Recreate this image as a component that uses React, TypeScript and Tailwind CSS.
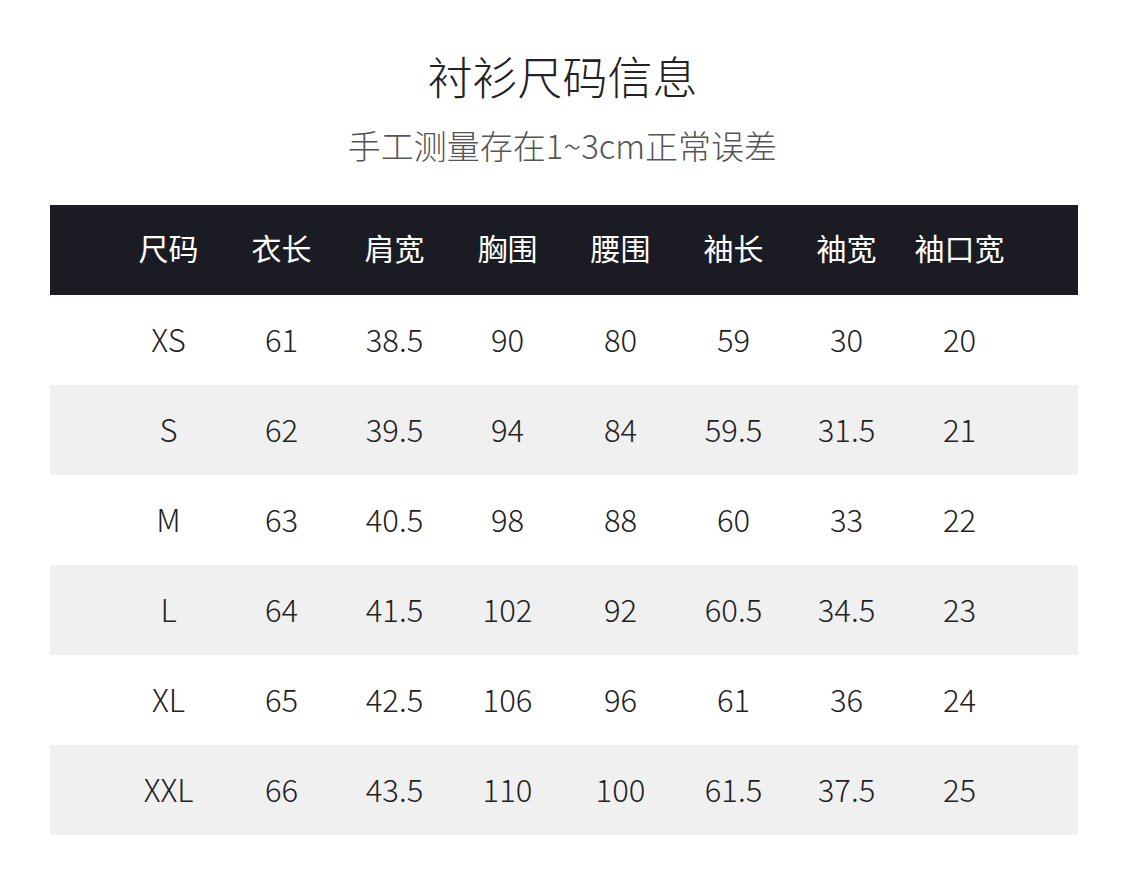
const headers = ["尺码", "衣长", "肩宽", "胸围", "腰围", "袖长", "袖宽", "袖口宽"];

const rows = [
    ["XS", "61", "38.5", "90", "80", "59", "30", "20"],
    ["S", "62", "39.5", "94", "84", "59.5", "31.5", "21"],
    ["M", "63", "40.5", "98", "88", "60", "33", "22"],
    ["L", "64", "41.5", "102", "92", "60.5", "34.5", "23"],
    ["XL", "65", "42.5", "106", "96", "61", "36", "24"],
    ["XXL", "66", "43.5", "110", "100", "61.5", "37.5", "25"],
];

export default function App() {
    return (
        <div
            className="h-[882px] w-[1125px] bg-white"
            style={{ fontFamily: '"Noto Sans CJK SC", "Noto Sans", sans-serif' }}
        >
            <div className="flex flex-col items-center pt-[48px]">
                <h1 className="text-[45px] leading-[56px] font-light text-[#222]">衬衫尺码信息</h1>
                <p className="mt-[19px] text-[33px] leading-[44px] font-light text-[#555]">手工测量存在1~3cm正常误差</p>
            </div>

            <div className="mx-[50px] mt-[38px] w-[1028px]">
                <div className="flex h-[90px] items-center bg-[#1b1b24] px-[62px] pb-[6px]">
                    {headers.map((h) => (
                        <div key={h} className="w-[113px] text-center text-[30px] font-normal text-white">
                            {h}
                        </div>
                    ))}
                </div>
                {rows.map((r, i) => (
                    <div
                        key={r[0]}
                        className={`flex h-[90px] items-center px-[62px] pb-[2px] ${i % 2 === 1 ? "bg-[#f0f0f0]" : "bg-white"}`}
                    >
                        {r.map((c, j) => (
                            <div key={j} className="w-[113px] text-center text-[31px] font-light text-[#222]">
                                {c}
                            </div>
                        ))}
                    </div>
                ))}
            </div>
        </div>
    );
}
